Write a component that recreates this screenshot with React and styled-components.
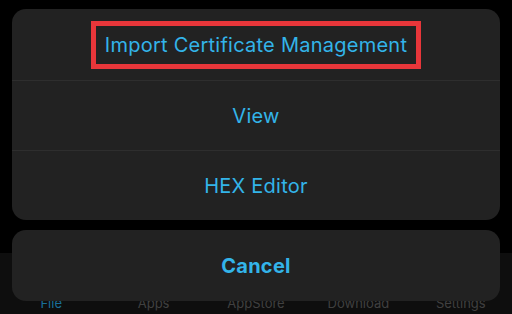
import React from 'react';
import styled, { createGlobalStyle } from 'styled-components';

const GlobalStyle = createGlobalStyle`
  * { margin: 0; padding: 0; box-sizing: border-box; }
  html, body { background: #000; }
  body {
    width: 512px;
    height: 314px;
    overflow: hidden;
    font-family: Inter, Roboto, sans-serif;
  }
`;

const Page = styled.div`
  position: relative;
  width: 512px;
  height: 314px;
  display: flex;
  flex-direction: column;
  justify-content: flex-end;
  background: #000;
`;

const TabBar = styled.nav`
  height: 61px;
  background: #0e0e0e;
  display: grid;
  grid-template-columns: repeat(5, 1fr);
  align-items: end;
  padding-bottom: 3px;
`;

const Tab = styled.span`
  text-align: center;
  font-size: 13px;
  line-height: 16px;
  color: ${p => (p.active ? '#1a6f99' : '#404040')};
`;

const Sheet = styled.div`
  position: absolute;
  left: 12px;
  right: 12px;
  top: 9px;
  display: flex;
  flex-direction: column;
  gap: 10px;
`;

const Card = styled.div`
  background: #222222;
  border-radius: 14px;
  display: flex;
  flex-direction: column;
  overflow: hidden;
`;

const Row = styled.button`
  height: ${p => (p.first ? 71 : 70)}px;
  border: none;
  border-top: ${p => (p.first ? 'none' : '1px solid #2e2e2e')};
  background: transparent;
  display: flex;
  align-items: center;
  justify-content: center;
  font-family: Inter, Roboto, sans-serif;
  font-size: 20px;
  letter-spacing: 0.25px;
  font-weight: ${p => (p.bold ? 700 : 400)};
  color: #33b4e9;
`;

const Highlight = styled.span`
  border: 5px solid #e8363a;
  padding: 9px 9px;
  line-height: 20px;
`;

export default function App() {
  return (
    <>
      <GlobalStyle />
      <Page>
        <TabBar>
          <Tab active>File</Tab>
          <Tab>Apps</Tab>
          <Tab>AppStore</Tab>
          <Tab>Download</Tab>
          <Tab>Settings</Tab>
        </TabBar>
        <Sheet>
          <Card>
            <Row first>
              <Highlight>Import Certificate Management</Highlight>
            </Row>
            <Row>View</Row>
            <Row>HEX Editor</Row>
          </Card>
          <Card>
            <Row first bold>Cancel</Row>
          </Card>
        </Sheet>
      </Page>
    </>
  );
}
